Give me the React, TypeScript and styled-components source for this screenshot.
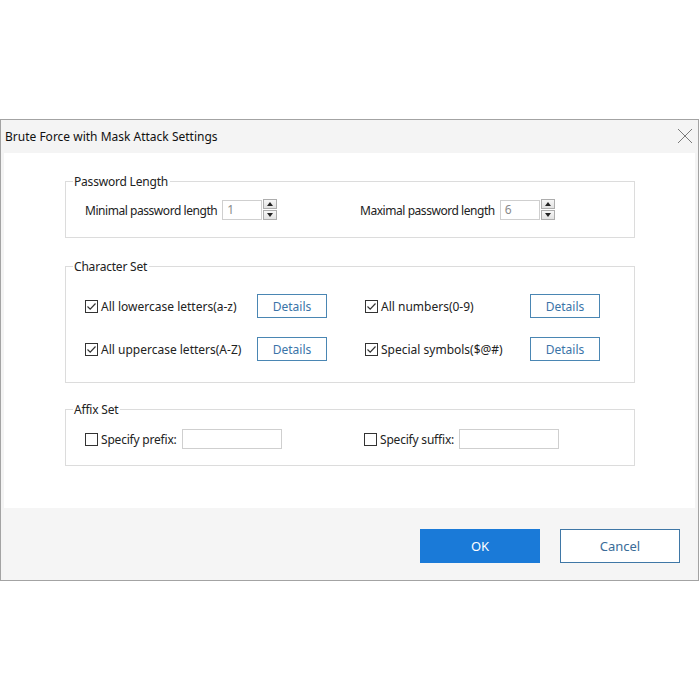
import styled, { createGlobalStyle } from "styled-components";

const GlobalStyle = createGlobalStyle`
  html, body {
    margin: 0;
    padding: 0;
    background: #ffffff;
  }
  body {
    font-family: "Noto Sans", "Open Sans", sans-serif;
    font-size: 12px;
    color: #222;
  }
`;

function CheckBox({ checked }: { checked: boolean }) {
  return (
    <CheckIcon width="13" height="13" viewBox="0 0 13 13">
      <rect x="0.5" y="0.5" width="12" height="12" fill="#fff" stroke="#333" />
      {checked && <polyline points="2.5,6.5 5.2,9.2 10.5,3.5" fill="none" stroke="#333" strokeWidth="1.2" />}
    </CheckIcon>
  );
}

function Spinner() {
  return (
    <SpinCol>
      <SpinBtn>
        <svg width="6" height="4" viewBox="0 0 6 4">
          <polygon points="3,0 6,4 0,4" fill="#222" />
        </svg>
      </SpinBtn>
      <SpinBtn>
        <svg width="6" height="4" viewBox="0 0 6 4">
          <polygon points="0,0 6,0 3,4" fill="#222" />
        </svg>
      </SpinBtn>
    </SpinCol>
  );
}

function NumberField({ label, value }: { label: string; value: string }) {
  return (
    <Field>
      <FieldLabel>{label}</FieldLabel>
      <NumInput>{value}</NumInput>
      <Spinner />
    </Field>
  );
}

function CharOption({ label }: { label: string }) {
  return (
    <OptionCell>
      <CheckLabel>
        <CheckBox checked />
        <span>{label}</span>
      </CheckLabel>
      <DetailsButton>Details</DetailsButton>
    </OptionCell>
  );
}

function AffixOption({ label }: { label: string }) {
  return (
    <CheckLabel>
      <CheckBox checked={false} />
      <AffixLabel>{label}</AffixLabel>
      <TextInput />
    </CheckLabel>
  );
}

export default function App() {
  return (
    <Page>
      <GlobalStyle />
      <Dialog>
        <TitleBar>
          <Title>Brute Force with Mask Attack Settings</Title>
          <CloseIcon width="16" height="16" viewBox="0 0 16 16">
            <line x1="1" y1="1" x2="15" y2="15" stroke="#7a7a7a" strokeWidth="1" />
            <line x1="15" y1="1" x2="1" y2="15" stroke="#7a7a7a" strokeWidth="1" />
          </CloseIcon>
        </TitleBar>

        <Body>
          <Group $top="0" $inner="9px" $bottom="17px">
            <Legend>Password Length</Legend>
            <Row $cols="275px 1fr" $gap="0">
              <NumberField label="Minimal password length" value="1" />
              <NumberField label="Maximal password length" value="6" />
            </Row>
          </Group>

          <Group $top="28px" $inner="18px" $bottom="21px">
            <Legend>Character Set</Legend>
            <Stack>
              <Row $cols="242px 235px" $gap="38px">
                <CharOption label="All lowercase letters(a-z)" />
                <CharOption label="All numbers(0-9)" />
              </Row>
              <Row $cols="242px 235px" $gap="38px">
                <CharOption label="All uppercase letters(A-Z)" />
                <CharOption label="Special symbols($@#)" />
              </Row>
            </Stack>
          </Group>

          <Group $top="26px" $inner="10px" $bottom="16px">
            <Legend>Affix Set</Legend>
            <Row $cols="279px 1fr" $gap="0">
              <AffixOption label="Specify prefix:" />
              <AffixOption label="Specify suffix:" />
            </Row>
          </Group>
        </Body>

        <Footer>
          <OkButton>OK</OkButton>
          <CancelButton>Cancel</CancelButton>
        </Footer>
      </Dialog>
    </Page>
  );
}

const Page = styled.div`
  padding-top: 119px;
`;

const Dialog = styled.div`
  width: 697px;
  border: 1px solid #a3a3a3;
  background: #f4f4f4;
  display: flex;
  flex-direction: column;
`;

const TitleBar = styled.div`
  height: 33px;
  display: flex;
  align-items: center;
  justify-content: space-between;
  padding: 0 5px 0 4px;
  background: #f4f4f4;
`;

const Title = styled.div`
  font-size: 12px;
  color: #111;
`;

const CloseIcon = styled.svg`
  display: block;
  margin-top: -2px;
`;

const Body = styled.div`
  margin: 0 3px;
  height: 355px;
  box-sizing: border-box;
  background: #fff;
  padding: 28px 0 0 61px;
  display: flex;
  flex-direction: column;
`;

const Group = styled.div<{ $top: string; $inner: string; $bottom: string }>`
  width: 570px;
  box-sizing: border-box;
  border: 1px solid #dcdcdc;
  margin-top: ${({ $top }) => $top};
  padding: 0 0 ${({ $bottom }) => $bottom} 19px;

  & > :last-child {
    margin-top: ${({ $inner }) => $inner};
  }
`;

const Legend = styled.div`
  width: fit-content;
  height: 18px;
  line-height: 18px;
  margin: -9px 0 0 -12px;
  padding: 0 2px 0 1px;
  background: #fff;
  color: #222;
  letter-spacing: -0.2px;
`;

const Stack = styled.div`
  display: flex;
  flex-direction: column;
  gap: 19px;
`;

const Row = styled.div<{ $cols: string; $gap: string }>`
  display: grid;
  grid-template-columns: ${({ $cols }) => $cols};
  column-gap: ${({ $gap }) => $gap};
  align-items: center;
`;

const Field = styled.div`
  display: flex;
  align-items: center;
  height: 20px;
`;

const FieldLabel = styled.span`
  margin-right: 5px;
  letter-spacing: -0.45px;
`;

const NumInput = styled.div`
  width: 40px;
  height: 20px;
  box-sizing: border-box;
  border: 1px solid #cfcfcf;
  color: #8a8a8a;
  padding-left: 4px;
  line-height: 18px;
  background: #fff;
`;

const SpinCol = styled.div`
  display: flex;
  flex-direction: column;
  gap: 1px;
  margin-left: 1px;
  margin-top: -1px;
`;

const SpinBtn = styled.div`
  width: 14px;
  height: 10px;
  box-sizing: border-box;
  border: 1px solid #adadad;
  background: linear-gradient(#f6f6f6, #e2e2e2);
  display: flex;
  align-items: center;
  justify-content: center;
`;

const OptionCell = styled.div`
  display: flex;
  align-items: center;
  justify-content: space-between;
  height: 24px;
`;

const CheckLabel = styled.label`
  display: flex;
  align-items: center;
  gap: 3px;
  height: 20px;
`;

const AffixLabel = styled.span`
  letter-spacing: -0.2px;
`;

const CheckIcon = styled.svg`
  display: block;
  flex: none;
`;

const DetailsButton = styled.button`
  width: 70px;
  height: 24px;
  box-sizing: border-box;
  border: 1px solid #4a86b3;
  background: #fff;
  color: #3a74a8;
  font-family: inherit;
  font-size: 12px;
  padding: 0;
`;

const TextInput = styled.div`
  width: 100px;
  height: 20px;
  box-sizing: border-box;
  border: 1px solid #cfcfcf;
  background: #fff;
  margin-left: 2px;
`;

const Footer = styled.div`
  margin: 0 3px;
  height: 72px;
  box-sizing: border-box;
  display: flex;
  justify-content: flex-end;
  align-items: flex-start;
  gap: 20px;
  padding: 21px 15px 0 0;
  background: #f5f5f5;
`;

const BaseButton = styled.button`
  width: 120px;
  height: 34px;
  box-sizing: border-box;
  font-family: inherit;
  font-size: 13px;
  padding: 0;
`;

const OkButton = styled(BaseButton)`
  background: #1a7ad8;
  border: 1px solid #1a7ad8;
  color: #fff;
`;

const CancelButton = styled(BaseButton)`
  background: #fff;
  border: 1px solid #3f77a6;
  color: #3a6c98;
`;
